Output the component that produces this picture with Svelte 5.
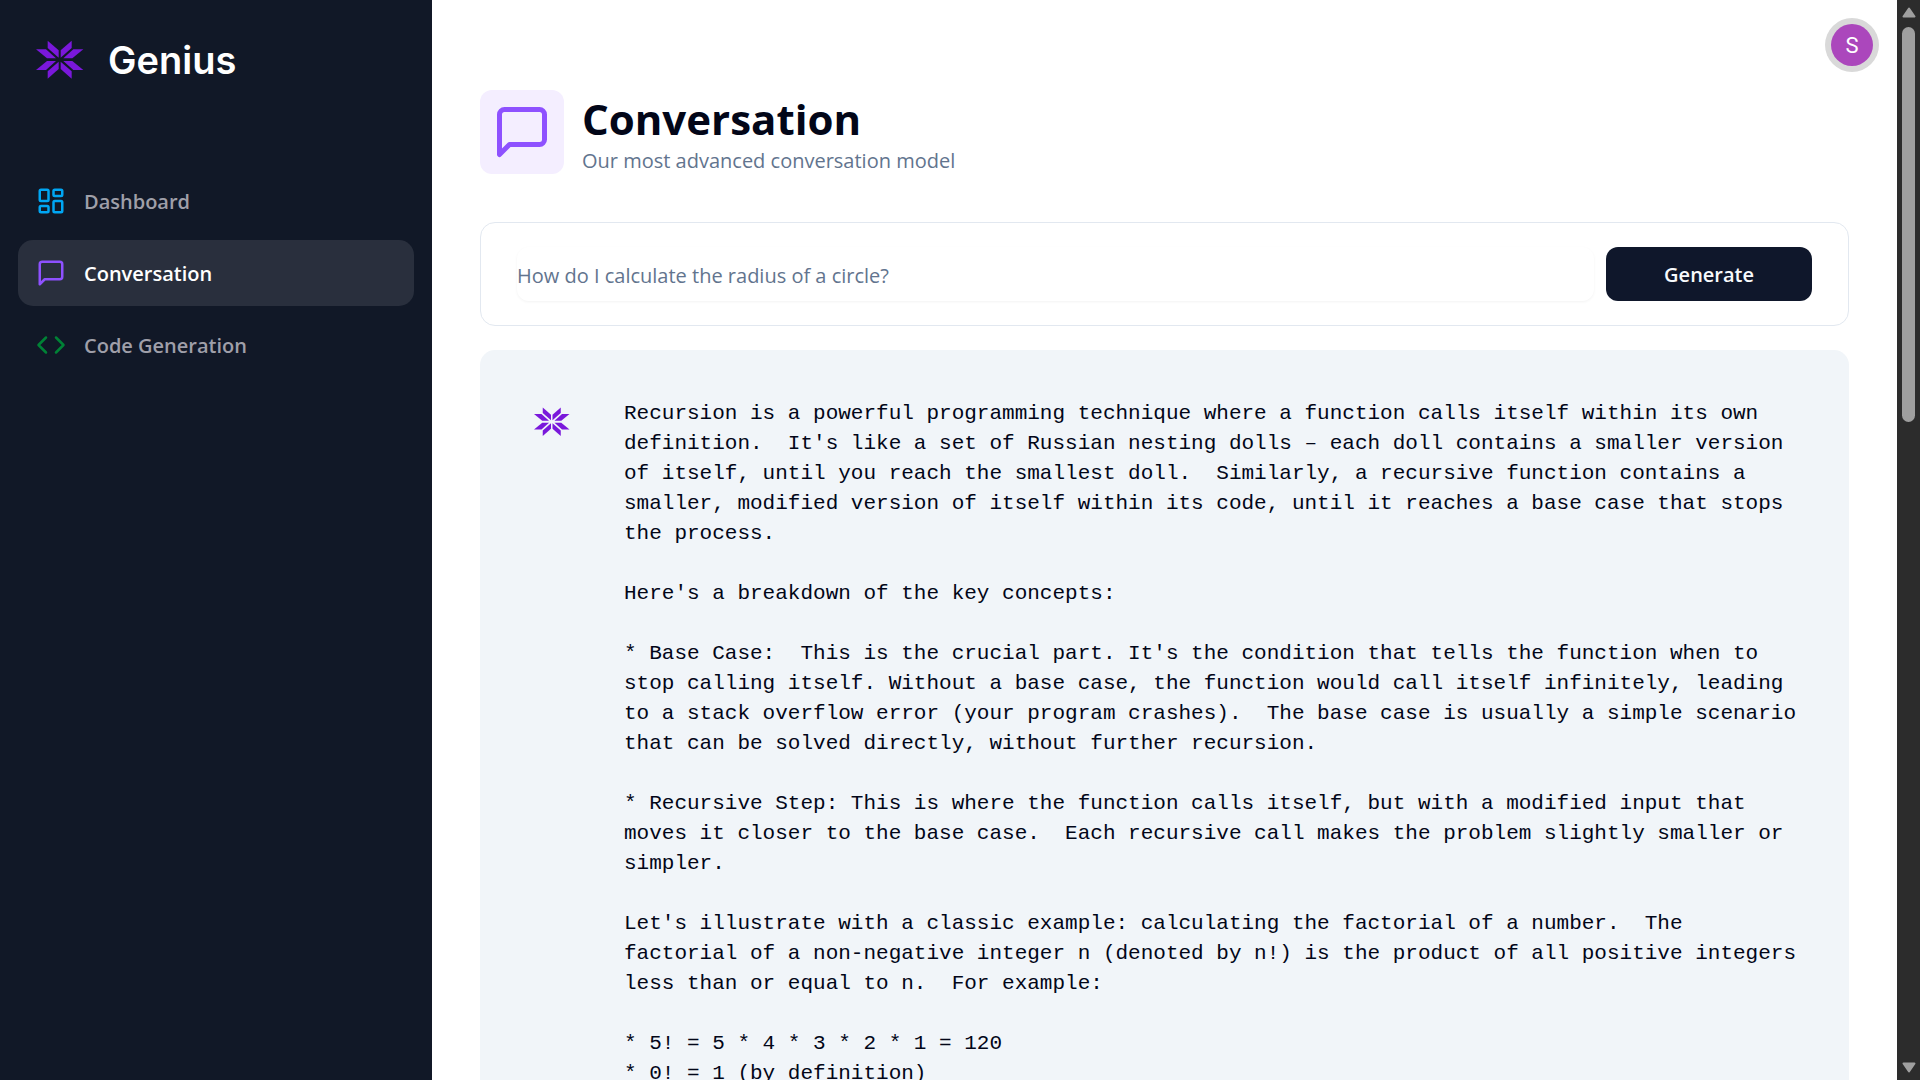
<script>
  const nav = [
    { label: 'Dashboard', icon: 'dashboard' },
    { label: 'Conversation', icon: 'chat', active: true },
    { label: 'Code Generation', icon: 'code' },
  ];

  let prompt = $state('');

  const answer = [
    "Recursion is a powerful programming technique where a function calls itself within its own definition.  It's like a set of Russian nesting dolls – each doll contains a smaller version of itself, until you reach the smallest doll.  Similarly, a recursive function contains a smaller, modified version of itself within its code, until it reaches a base case that stops the process.",
    "Here's a breakdown of the key concepts:",
    "* Base Case:  This is the crucial part. It's the condition that tells the function when to stop calling itself. Without a base case, the function would call itself infinitely, leading to a stack overflow error (your program crashes).  The base case is usually a simple scenario that can be solved directly, without further recursion.",
    '* Recursive Step: This is where the function calls itself, but with a modified input that moves it closer to the base case.  Each recursive call makes the problem slightly smaller or simpler.',
    "Let's illustrate with a classic example: calculating the factorial of a number.  The factorial of a non-negative integer n (denoted by n!) is the product of all positive integers less than or equal to n.  For example:",
    '* 5! = 5 * 4 * 3 * 2 * 1 = 120\n* 0! = 1 (by definition)',
  ];
</script>

{#snippet logo()}
  <svg class="logo" viewBox="-71 -71 144 144" aria-hidden="true">
    {#each ['1 1', '-1 1', '1 -1', '-1 -1'] as s}
      <g transform="scale({s})">
        <path d="M-36-57-3-28V-6L-36-35Z" />
        <path d="M-71-31H-41L-11-4H-38Z" />
      </g>
    {/each}
  </svg>
{/snippet}

{#snippet icon(name)}
  <svg class="icon {name}" viewBox="0 0 24 24" aria-hidden="true">
    {#if name === 'dashboard'}
      <rect width="7" height="9" x="3" y="3" rx="1" />
      <rect width="7" height="5" x="14" y="3" rx="1" />
      <rect width="7" height="9" x="14" y="12" rx="1" />
      <rect width="7" height="5" x="3" y="16" rx="1" />
    {:else if name === 'chat'}
      <path d="M21 15a2 2 0 0 1-2 2H7l-4 4V5a2 2 0 0 1 2-2h14a2 2 0 0 1 2 2z" />
    {:else}
      <path d="m16 18 6-6-6-6M8 6l-6 6 6 6" />
    {/if}
  </svg>
{/snippet}

<div class="app">
  <aside class="sidebar">
    <a class="brand" href="#home">
      {@render logo()}
      <span>Genius</span>
    </a>
    <nav>
      {#each nav as item}
        <a href="#{item.icon}" class="link" class:active={item.active}>
          {@render icon(item.icon)}
          <span>{item.label}</span>
        </a>
      {/each}
    </nav>
  </aside>

  <main>
    <header class="topbar">
      <button class="avatar" aria-label="Open user menu">S</button>
    </header>

    <div class="content">
      <section class="heading">
        <div class="badge">{@render icon('chat')}</div>
        <div>
          <h1>Conversation</h1>
          <p>Our most advanced conversation model</p>
        </div>
      </section>

      <form onsubmit={(e) => e.preventDefault()}>
        <input
          type="text"
          aria-label="Prompt"
          placeholder="How do I calculate the radius of a circle?"
          bind:value={prompt}
        />
        <button type="submit">Generate</button>
      </form>

      <article>
        <div class="bot">{@render logo()}</div>
        <div class="answer">
          {#each answer as paragraph}
            <p>{paragraph}</p>
          {/each}
        </div>
      </article>
    </div>
  </main>

  <div class="scrollbar" aria-hidden="true">
    <svg viewBox="0 0 14 11"><path d="M7 1.5 12.5 9.5H1.5Z" /></svg>
    <div class="track"><div class="thumb"></div></div>
    <svg viewBox="0 0 14 11"><path d="M7 9.5 12.5 1.5H1.5Z" /></svg>
  </div>
</div>

<style>
  :global(body) {
    margin: 0;
    background: #fff;
  }

  .app,
  .app :global(*) {
    box-sizing: border-box;
  }

  .app {
    display: flex;
    height: 100vh;
    overflow: hidden;
    font-family: 'Open Sans', 'Noto Sans', sans-serif;
    font-size: 20px;
    line-height: 30px;
    color: #020618;
  }

  a {
    color: inherit;
    text-decoration: none;
  }

  h1,
  p {
    margin: 0;
  }

  .sidebar {
    flex: none;
    width: 432px;
    padding: 36px 18px;
    background: #111827;
    color: #fff;
  }

  .brand {
    display: flex;
    align-items: center;
    gap: 24px;
    margin-bottom: 84px;
    padding-left: 18px;
    font-family: Inter, sans-serif;
    font-size: 38px;
    font-weight: 600;
    line-height: 48px;
  }

  .logo {
    display: block;
    width: 48px;
    height: 48px;
    fill: #7a18db;
  }

  nav {
    display: flex;
    flex-direction: column;
    gap: 6px;
  }

  .link {
    display: flex;
    align-items: center;
    gap: 18px;
    padding: 18px;
    border-radius: 15px;
    color: #9f9fa9;
    font-weight: 600;
  }

  .link span {
    padding-top: 2px;
    line-height: 28px;
  }

  .link.active {
    background: #292f3d;
    color: #fff;
  }

  .icon {
    display: block;
    width: 30px;
    height: 30px;
    fill: none;
    stroke-width: 2;
    stroke-linecap: round;
    stroke-linejoin: round;
  }

  .dashboard {
    stroke: #00a6f4;
  }

  .chat {
    stroke: #8e51ff;
  }

  .code {
    stroke: #008236;
  }

  main {
    flex: 1;
    min-width: 0;
    overflow: hidden;
  }

  .topbar {
    display: flex;
    justify-content: flex-end;
    padding: 24px;
  }

  .avatar {
    width: 42px;
    height: 42px;
    padding: 0;
    border: 0;
    border-radius: 50%;
    background: #ab47bc;
    box-shadow: 0 0 0 6px #d9d9d9;
    color: #fff;
    font-family: Roboto, sans-serif;
    font-size: 22px;
  }

  .content {
    padding: 0 48px;
  }

  .heading {
    display: flex;
    align-items: center;
    gap: 18px;
    margin-bottom: 48px;
  }

  .badge {
    padding: 12px;
    border-radius: 12px;
    background: #f4eeff;
  }

  .badge .icon {
    width: 60px;
    height: 60px;
  }

  h1 {
    font-size: 42px;
    font-weight: 700;
    line-height: 58px;
  }

  .heading p {
    line-height: 26px;
    color: #62748e;
  }

  form {
    display: grid;
    grid-template-columns: repeat(12, 1fr);
    gap: 12px;
    padding: 24px 36px;
    border: 1px solid #e2e8f0;
    border-radius: 15px;
  }

  input {
    grid-column: span 10;
    min-width: 0;
    height: 54px;
    padding: 2px 0 0;
    border: 0;
    border-radius: 12px;
    background: transparent;
    box-shadow: 0 1px 3px rgb(0 0 0 / 5%);
    color: inherit;
    font: inherit;
    outline: none;
  }

  input::placeholder {
    color: #62748e;
    opacity: 1;
  }

  form button {
    grid-column: span 2;
    height: 54px;
    padding: 2px 0 0;
    border: 0;
    border-radius: 12px;
    background: #0f172b;
    color: #f8fafc;
    font: inherit;
    font-weight: 600;
  }

  article {
    display: flex;
    align-items: flex-start;
    gap: 48px;
    margin-top: 24px;
    padding: 48px;
    border-radius: 15px;
    background: #f1f5f9;
  }

  .bot {
    flex: none;
    padding: 6px;
  }

  .bot .logo {
    width: 36px;
    height: 36px;
  }

  .answer {
    display: flex;
    flex-direction: column;
    gap: 30px;
    min-width: 0;
    padding-top: 1px;
    font-family: 'Liberation Mono', monospace;
    font-size: 21px;
    white-space: pre-wrap;
  }

  .scrollbar {
    display: flex;
    flex: none;
    flex-direction: column;
    align-items: center;
    gap: 9px;
    width: 23px;
    padding: 7px 0;
    background: #2c2c2c;
  }

  .scrollbar svg {
    flex: none;
    width: 14px;
    height: 11px;
    fill: #9f9f9f;
    stroke: #9f9f9f;
    stroke-width: 2;
    stroke-linejoin: round;
  }

  .track {
    flex: 1;
    width: 13px;
  }

  .thumb {
    height: 38.5%;
    border-radius: 7px;
    background: #9f9f9f;
  }
</style>
